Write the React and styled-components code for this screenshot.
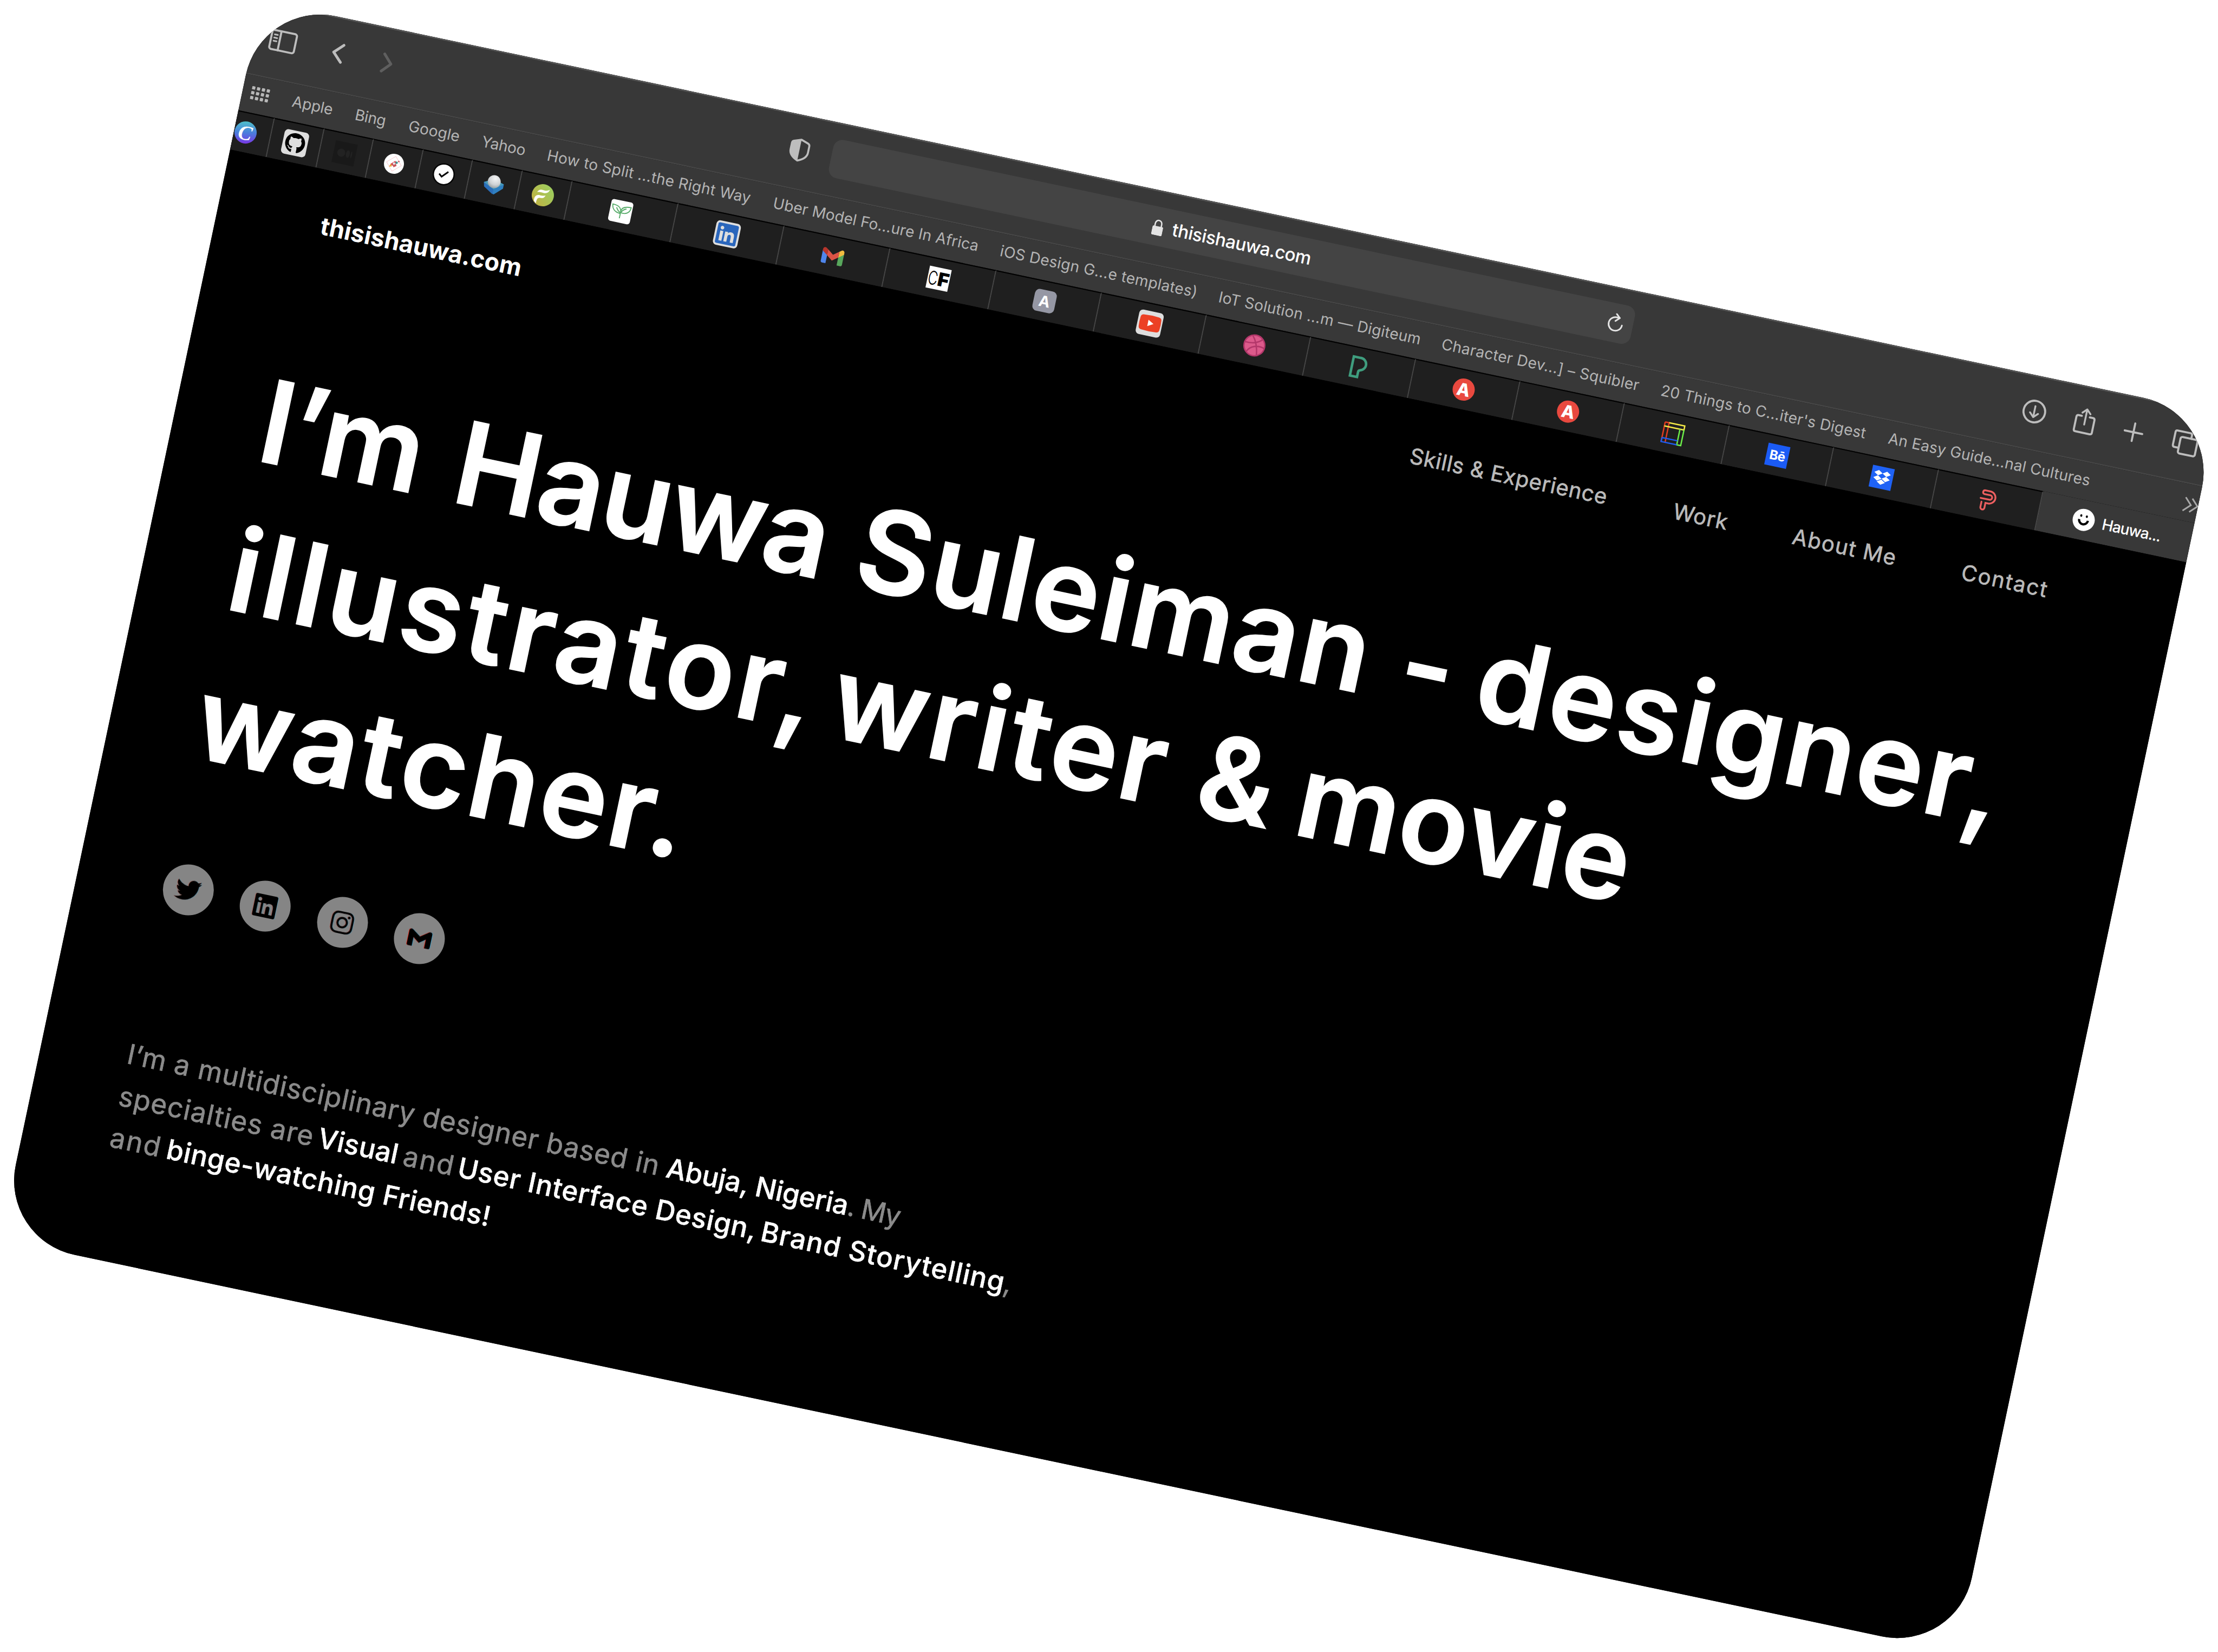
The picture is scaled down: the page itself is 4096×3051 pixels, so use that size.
import React from 'react';
import styled, { createGlobalStyle } from 'styled-components';
import { FaTwitter, FaLinkedin, FaInstagram, FaGithub, FaDropbox } from 'react-icons/fa';

const Global = createGlobalStyle`
  html, body { margin: 0; background: #fff; }
  body { overflow: hidden; font-family: Inter, Roboto, sans-serif; }
  * { box-sizing: border-box; }
`;

const Stage = styled.main`
  width: 4096px;
  height: 3051px;
  padding: 0.7px 0 0 482.5px;
  overflow: hidden;
  background: #fff;
`;

const Window = styled.div`
  display: flex;
  flex-direction: column;
  width: 3692px;
  height: 2337.5px;
  border-radius: 140.4px;
  overflow: hidden;
  background: #000;
  transform: rotate(11.92deg);
  transform-origin: 0 0;
`;

/* ---------- browser toolbar ---------- */

const Toolbar = styled.header`
  display: flex;
  align-items: flex-start;
  height: 137.6px;
  padding: 30.4px 24px 0 29px;
  background: #383838;
  border-bottom: 2.6px solid #484848;
  box-shadow: inset 0 2.6px 0 #565656;
`;

const ToolIcon = styled.svg`
  flex: none;
  width: ${(p) => p.$w}px;
  height: 72px;
  margin-left: ${(p) => p.$gap || 0}px;
  fill: none;
  stroke: ${(p) => p.$color || '#bdbdbd'};
  stroke-width: 3.8;
  stroke-linecap: round;
  stroke-linejoin: round;
  overflow: visible;
`;

const AddressBar = styled.div`
  display: grid;
  grid-template-columns: 1fr auto 1fr;
  align-items: center;
  flex: none;
  width: 1512.5px;
  height: 72px;
  margin-left: 41px;
  border-radius: 17px;
  background: #444;
`;

const Address = styled.div`
  grid-column: 2;
  display: flex;
  align-items: center;
  gap: 17.5px;
  color: #fff;
  font-size: 33.3px;
  line-height: 72px;
  font-weight: 500;
  letter-spacing: -0.48px;
`;

const LockIcon = styled.svg`
  width: 20px;
  height: 30px;
  margin-top: 3px;
`;

const ReloadIcon = styled.svg`
  justify-self: end;
  width: 30px;
  height: 36px;
  margin-right: 17px;
  fill: none;
  stroke: #e4e4e4;
  stroke-width: 3;
  stroke-linecap: round;
  stroke-linejoin: round;
`;

/* ---------- bookmarks ---------- */

const Bookmarks = styled.nav`
  display: flex;
  align-items: center;
  height: 69.4px;
  padding: 0 0 5px 16px;
  background: #383838;
  color: #b4b4b4;
  font-size: 28.2px;
  line-height: 40px;
`;

const Bookmark = styled.span`
  flex: none;
  width: ${(p) => p.$w}px;
  letter-spacing: ${(p) => p.$ls}px;
  white-space: nowrap;
`;

const DotsIcon = styled.svg`
  flex: none;
  width: 34px;
  height: 26px;
  margin-right: 44px;
  fill: #b8b8b8;
`;

const MoreIcon = styled.svg`
  flex: none;
  width: 30px;
  height: 30px;
  margin: 12px 0 0 auto;
  fill: none;
  stroke: #a8a8a8;
  stroke-width: 3;
`;

/* ---------- tabs ---------- */

const TabBar = styled.div`
  display: flex;
  height: 73.6px;
  background: #383838;
`;

const Tab = styled.div`
  flex: none;
  display: flex;
  align-items: center;
  justify-content: center;
  width: ${(p) => p.$w}px;
  margin-left: ${(p) => p.$offset || 0}px;
  border-top: 2.6px solid #000;
  border-right: 2.6px solid #474747;
  background: #1f1f1f;
`;

const ActiveTab = styled.div`
  flex: 1;
  display: flex;
  align-items: center;
  gap: 14px;
  padding-left: 63px;
  color: #fff;
  font-size: 28.2px;
  font-weight: 500;
  letter-spacing: -1.09px;
`;

const Favicon = styled.svg`
  width: 41px;
  height: 41px;
  overflow: visible;
`;

const Plate = styled.span`
  display: flex;
  align-items: center;
  justify-content: center;
  width: 46px;
  height: 46px;
  border-radius: 7px;
  background: #dedede;
  color: ${(p) => p.$color};
  font-size: ${(p) => p.$size}px;
`;

const Tile = styled.span`
  display: flex;
  align-items: center;
  justify-content: center;
  width: 41px;
  height: 41px;
  border-radius: ${(p) => p.$r || 0};
  background: ${(p) => p.$bg};
  color: #fff;
  font-family: ${(p) => p.$font || 'Inter, sans-serif'};
  font-size: ${(p) => p.$size}px;
  font-weight: ${(p) => p.$weight || 700};
  font-style: ${(p) => p.$style || 'normal'};
  line-height: 1;
  letter-spacing: ${(p) => p.$ls || 0}px;
`;

/* ---------- page ---------- */

const Page = styled.section`
  display: flex;
  flex-direction: column;
  flex: 1;
  background: #000;
  color: #fff;
`;

const PageNav = styled.nav`
  display: flex;
  align-items: center;
  height: 206px;
  padding-left: 193px;
`;

const Logo = styled.strong`
  font-size: 45px;
  font-weight: 700;
  line-height: 60px;
  letter-spacing: 0.19px;
`;

const Links = styled.div`
  display: flex;
  width: 1443px;
  margin-left: auto;
  color: #bababa;
  font-size: 40px;
  line-height: 60px;
  -webkit-text-stroke: 0.7px currentColor;
`;

const Headline = styled.h1`
  margin: 129.5px 0 0;
  font-size: 212px;
  font-weight: 600;
  line-height: 280.2px;
  -webkit-text-stroke: 2px currentColor;
`;

const Line = styled.span`
  display: flex;
  padding-left: ${(p) => p.$x}px;
`;

const Word = styled.span`
  flex: none;
  width: ${(p) => (p.$w ? `${p.$w}px` : 'auto')};
  letter-spacing: ${(p) => p.$ls || 0}px;
  white-space: nowrap;
`;

const StrongWord = styled(Word)`
  color: #fff;
  font-weight: 500;
  -webkit-text-stroke: 0.5px currentColor;
`;

const Socials = styled.div`
  display: flex;
  gap: 51.5px;
  margin: 131.7px 0 0 159.5px;
`;

const Social = styled.a`
  display: flex;
  align-items: center;
  justify-content: center;
  width: 94px;
  height: 94px;
  border-radius: 50%;
  background: #858585;
  color: #000;
  font-size: ${(p) => p.$size || 43}px;

  svg {
    overflow: visible;
    filter: drop-shadow(-1px 0 0 ${(p) => p.$red || '#a25a50'}) drop-shadow(1px 0 0 ${(p) => p.$blue || '#5a93ac'});
  }
`;

const Bio = styled.p`
  margin: 232.8px 0 0;
  color: #8b8b8b;
  font-size: 51px;
  line-height: 78.4px;
  -webkit-text-stroke: 0.7px currentColor;
`;

/* ---------- content ---------- */

const bookmarks = [
  ['Apple', 118.7, -0.17],
  ['Bing', 101, -0.37],
  ['Google', 137.9, 0.17],
  ['Yahoo', 123.8, -0.21],
  ['How to Split ...the Right Way', 426.4, 0.25],
  ['Uber Model Fo...ure In Africa', 428.5, 0.12],
  ['iOS Design G...e templates)', 412.3, 0.26],
  ['IoT Solution ...m — Digiteum', 420.9, 0.21],
  ['Character Dev...] – Squibler', 414, 0.28],
  ["20 Things to C...iter's Digest", 429.2, 0.25],
  ['An Easy Guide...nal Cultures', 384, 0.13],
];

const links = [
  ['Skills & Experience', 497, 0.72],
  ['Work', 225, 0.98],
  ['About Me', 319, 1.56],
  ['Contact', 0, 2.06],
];

export default function App() {
  return (
    <Stage>
      <Global />
      <Window>
        <Toolbar>
          <ToolIcon $w={51} viewBox="0 0 51 72">
            <rect x="2.4" y="18" width="46.4" height="35.8" rx="4" />
            <path d="M19 18v36" />
            <path d="M8 26h5.5M8 32h5.5M8 38h5.5" strokeWidth="3" />
          </ToolIcon>
          <ToolIcon $w={23} $gap={66} viewBox="0 0 23 72">
            <path d="M20 19.5 4 35.6 20 51.7" strokeWidth="5" />
          </ToolIcon>
          <ToolIcon $w={23} $gap={71} $color="#5f5f5f" viewBox="0 0 23 72">
            <path d="M3 19.5 18 35.6 3 51.7" strokeWidth="5" />
          </ToolIcon>
          <ToolIcon $w={38} $gap={747} viewBox="0 0 38 72">
            <path d="M19 15.6 32 20q3.4 1.2 3.4 4.6V37c0 8-5.4 13.4-16.4 17.8C8 50.4 2.6 45 2.6 37V24.6Q2.6 21.2 6 20Z" strokeWidth="3.6" />
            <path d="M19 15.6V54.8C8 50.4 2.6 45 2.6 37V24.6Q2.6 21.2 6 20Z" fill="#bdbdbd" stroke="none" />
          </ToolIcon>
          <AddressBar>
            <Address>
              <LockIcon viewBox="0 0 20 30">
                <rect x="0" y="13" width="20" height="17" rx="2.5" fill="#e4e4e4" />
                <path d="M4 14V8.5a6 6.5 0 0 1 12 0V14" fill="none" stroke="#e4e4e4" strokeWidth="2.6" />
              </LockIcon>
              <span>thisishauwa.com</span>
            </Address>
            <ReloadIcon viewBox="0 0 30 36">
              <path d="M27 20.5A12.500 12.500 0 1 1 14.5 7.5H20" />
              <path d="M13.5 1.500 20.5 7.8 13.5 14.5" />
            </ReloadIcon>
          </AddressBar>
          <ToolIcon $w={46} $gap={735.5} viewBox="0 0 46 72">
            <circle cx="23" cy="36.5" r="20" />
            <path d="M23 26.5v20M15.5 39.5 23 47l7.5-7.5" strokeWidth="3.4" />
          </ToolIcon>
          <ToolIcon $w={38} $gap={53} viewBox="0 0 38 72">
            <path d="M11.5 26H5.5Q2 26 2 29.5V53q0 3.5 3.5 3.5h27Q36 56.5 36 53V29.5Q36 26 32.5 26H26.5" />
            <path d="M19 41V12.5M11.5 20 19 12.5 26.5 20" strokeWidth="3.4" />
          </ToolIcon>
          <ToolIcon $w={36} $gap={54.5} viewBox="0 0 36 72">
            <path d="M18 19.5v33M1.5 36h33" />
          </ToolIcon>
          <ToolIcon $w={48} $gap={56} viewBox="0 0 48 72">
            <path d="M13 47H5.5Q2 47 2 43.5V19.5Q2 16 5.500 16H29.500Q33 16 33 19.500V26" />
            <rect x="13.5" y="26" width="32" height="31" rx="3.5" />
          </ToolIcon>
        </Toolbar>

        <Bookmarks>
          <DotsIcon viewBox="0 0 34 26">
            {[0, 1, 2].map((r) =>
              [0, 1, 2, 3].map((c) => (
                <rect key={`${r}${c}`} x={c * 9.2 + 0.2} y={r * 9.2 + 0.8} width="6" height="6" rx="1.2" />
              ))
            )}
          </DotsIcon>
          {bookmarks.map(([label, w, ls]) => (
            <Bookmark key={label} $w={w} $ls={ls}>{label}</Bookmark>
          ))}
          <MoreIcon viewBox="0 0 30 30">
            <path d="M4.500 2.500 16.500 15 3.500 28M17 2.500 29 15 16 28" />
          </MoreIcon>
        </Bookmarks>

        <TabBar>
          <Tab $w={94} $offset={-25}>
            <Tile
              $bg="linear-gradient(170deg,#4fc3c8 5%,#4a7fdc 50%,#7a35e6 95%)"
              $r="50%"
              $font="'Liberation Serif', serif"
              $style="italic"
              $size={38}
            >
              C
            </Tile>
          </Tab>
          <Tab $w={93.6}><Plate $color="#000" $size={38}><FaGithub /></Plate></Tab>
          <Tab $w={93.6}>
            <Favicon viewBox="0 0 41 41">
              <rect width="41" height="41" fill="#191919" />
              <circle cx="14" cy="20.5" r="7.5" fill="#222" />
              <ellipse cx="26.5" cy="20.5" rx="3.6" ry="7" fill="#222" />
              <ellipse cx="33" cy="20.5" rx="1.4" ry="6.2" fill="#222" />
            </Favicon>
          </Tab>
          <Tab $w={93.6}>
            <Favicon viewBox="0 0 41 41">
              <circle cx="20.5" cy="20.5" r="18.5" fill="#fff" />
              <rect x="10.500" y="10.500" width="20" height="20" transform="rotate(-42 20.500 20.500)" fill="none" stroke="#f6c9cd" strokeWidth="0.9" />
              <path d="M14 22 22 14.5 24.5 18 18 24.5Z" fill="#d9484f" />
              <path d="M18 22.5 24 19.5 26 23.5 21 27Z" fill="#c9565c" />
              <circle cx="20.5" cy="20" r="2.2" fill="#dfe9ee" />
              <circle cx="25" cy="17.5" r="2.2" fill="#3f8f8f" />
              <circle cx="28.5" cy="14.5" r="1.4" fill="#c9484f" />
              <path d="M12.5 27.5 14.5 21.5 18 26Z" fill="#e9a53a" />
            </Favicon>
          </Tab>
          <Tab $w={93.6}>
            <Favicon viewBox="0 0 41 41">
              <circle cx="20.5" cy="20.5" r="20.5" fill="#050505" />
              <circle cx="20.5" cy="20.5" r="18" fill="#fff" />
              <path d="M12 21 17.5 25.500 28 14.500" fill="none" stroke="#000" strokeWidth="3" />
            </Favicon>
          </Tab>
          <Tab $w={93.6}>
            <Favicon viewBox="0 0 41 41">
              <defs>
                <radialGradient id="dome" cx="0.55" cy="0.25" r="0.8">
                  <stop offset="0" stopColor="#f3f4f5" />
                  <stop offset="0.6" stopColor="#cfd2d5" />
                  <stop offset="1" stopColor="#8f979c" />
                </radialGradient>
              </defs>
              <path d="M2 19 19 10l20 6v8L24 38 5 27Z" fill="#2f7fc0" />
              <path d="M2 19 22 28.5V38L4 27Z" fill="#2a6db8" />
              <path d="M2 19 19 10l20 6-17 12.5Z" fill="#4799b8" />
              <circle cx="20.5" cy="14.5" r="12" fill="url(#dome)" />
            </Favicon>
          </Tab>
          <Tab $w={93.6}>
            <Favicon viewBox="0 0 41 41">
              <defs>
                <linearGradient id="leaf" x1="1" y1="0" x2="0" y2="1">
                  <stop offset="0.2" stopColor="#9fcb5c" />
                  <stop offset="0.9" stopColor="#c2b243" />
                </linearGradient>
              </defs>
              <circle cx="20.5" cy="20.5" r="20.5" fill="url(#leaf)" />
              <path d="M9 17C11 11.5 15 10.5 19 11c5 .6 8 .3 12.5-3C30 14 26.5 16.5 20.5 16c-5-.4-8-.6-11.5 1ZM6.5 34C5 27 8 21.5 15 21.5c4 0 6 .5 10.5-1.7C24.5 24.5 21.5 26.3 17 26.3c-4.5 0-6.500 3-6 11.500Z" fill="#fff" />
            </Favicon>
          </Tab>
          <Tab $w={200}>
            <Favicon viewBox="0 0 41 41">
              <rect width="41" height="41" rx="5" fill="#fff" />
              <g fill="none" stroke="#57ab69" strokeWidth="1.9">
                <path d="M20.5 33V20C20.5 13 26 9.5 38 9.5 38 19 31 24 21 22.5" />
                <path d="M20 24C11 23.5 4 19 3.5 9.5 14 9.5 19 12.5 20.5 20" />
                <path d="M11.5 14c2 4 4.5 6.5 8.5 8.5M30 13.5c-4 1.5-7 4-8.5 8" />
              </g>
            </Favicon>
          </Tab>
          <Tab $w={200}><Plate $color="#2a66bc" $size={44}><FaLinkedin /></Plate></Tab>
          <Tab $w={200}>
            <Favicon viewBox="0 0 41 41">
              <path d="M0.500 12v20.500a3 3 0 0 0 3 3H10V18Z" fill="#4f86ec" />
              <path d="M40.500 12v20.500a3 3 0 0 1-3 3H31V18Z" fill="#58a75c" />
              <path d="M31 9.5 34.5 7c2.5-1.8 6-.2 6 3v3.5L31 20.5Z" fill="#f0bb40" />
              <path d="M10 9.5 6.5 7c-2.5-1.8-6-.2-6 3v3.5L10 20.5Z" fill="#b6352c" />
              <path d="M10 9.5 20.5 17.5 31 9.5V20.5L20.5 28.5 10 20.5Z" fill="#dc5345" />
            </Favicon>
          </Tab>
          <Tab $w={200}>
            <Favicon viewBox="0 0 41 41">
              <rect width="41" height="41" fill="#fff" />
              <text x="1" y="33.5" fontFamily="Inter, sans-serif" fontSize="35" fontWeight="300" textLength="18" lengthAdjust="spacingAndGlyphs">C</text>
              <text x="19" y="33.5" fontFamily="Inter, sans-serif" fontSize="35" fontWeight="900" textLength="21" lengthAdjust="spacingAndGlyphs">F</text>
            </Favicon>
          </Tab>
          <Tab $w={199.8}><Tile $bg="#9597a4" $r="9px" $size={28} $weight={700}>A</Tile></Tab>
          <Tab $w={197.4}>
            <Plate>
              <Favicon viewBox="0 0 41 41">
                <path d="M6 6.5Q20.5 5 35 6.5 39.5 7 40 11.5q1 9 0 18Q39.5 34 35 34.5 20.5 36 6 34.5 1.5 34 1 29.5q-1-9 0-18Q1.5 7 6 6.5Z" fill="#ec4024" />
                <path d="M16.5 14.5 27 20.5 16.5 26.5Z" fill="#fff" />
              </Favicon>
            </Plate>
          </Tab>
          <Tab $w={197.4}>
            <Favicon viewBox="0 0 41 41">
              <circle cx="20.5" cy="20.5" r="19.2" fill="#dc5a8b" />
              <g fill="none" stroke="#b3376a" strokeWidth="2.6">
                <circle cx="20.5" cy="20.5" r="19.2" />
                <path d="M14 3C21 11 26 22 28 37.5M2 17C14 18 26 15 33.5 7M8 34.5C13 23 26 18 39.5 22.5" />
              </g>
            </Favicon>
          </Tab>
          <Tab $w={197.4}>
            <Favicon viewBox="0 0 41 41">
              <path d="M7.5 2.5H20a11.5 11.5 0 0 1 4 22.6Q21 26 21 28.500V38.5H7.500Z" fill="none" stroke="#3f9d7e" strokeWidth="4.6" />
            </Favicon>
          </Tab>
          <Tab $w={197.4}><Tile $bg="#e9493f" $r="50%" $size={32} $weight={800}>A</Tile></Tab>
          <Tab $w={197.4}><Tile $bg="#e9493f" $r="50%" $size={32} $weight={800}>A</Tile></Tab>
          <Tab $w={197.4}>
            <Favicon viewBox="0 0 41 41">
              <g fill="none" strokeWidth="2.5">
                <path d="M2 2h7.5v37M2 39V2" stroke="#e23c22" />
                <path d="M9.5 2H39v7.5H2" stroke="#f3ea47" />
                <path d="M39 9.5V39h-7.5V9.5" stroke="#6df04a" />
                <path d="M2 31.5h29.5M2 31.5V39h29.5" stroke="#205cf0" />
              </g>
            </Favicon>
          </Tab>
          <Tab $w={197.6}><Tile $bg="#1b5bf5" $size={24} $ls={-0.5}>Bē</Tile></Tab>
          <Tab $w={197.4}><Tile $bg="#1f62f5" $size={31}><FaDropbox /></Tile></Tab>
          <Tab $w={197.8}>
            <Favicon viewBox="0 0 41 41">
              <path d="M9 19H25.500a4.200 4.200 0 0 0 0-8.400H14a3.600 3.600 0 0 1 0-7H24.500a11 11 0 0 1 0 22.600H19.500V35.500a3.800 3.800 0 0 1-7.600 0V25.500" fill="none" stroke="#ec5f60" strokeWidth="3.3" strokeLinecap="round" />
            </Favicon>
          </Tab>
          <ActiveTab>
            <Favicon viewBox="0 0 41 41">
              <circle cx="20.5" cy="20.5" r="20.5" fill="#fff" />
              <ellipse cx="14.5" cy="13.5" rx="2" ry="2.3" />
              <ellipse cx="25" cy="13.5" rx="2" ry="2.3" />
              <path d="M12 20.5a8.2 8.2 0 0 0 16.5 0" fill="none" stroke="#000" strokeWidth="4.2" />
            </Favicon>
            <span>Hauwa...</span>
          </ActiveTab>
        </TabBar>

        <Page>
          <PageNav>
            <Logo>thisishauwa.com</Logo>
            <Links>
              {links.map(([label, w, ls]) => (
                <Word key={label} $w={w} $ls={ls}>{label}</Word>
              ))}
            </Links>
          </PageNav>
          <Headline>
            <Line $x={161.5}>
              <Word $w={368} $ls={-0.76}>I’m</Word>
              <Word $w={758} $ls={-1.54}>Hauwa</Word>
              <Word $w={1025.3} $ls={2.62}>Suleiman</Word>
              <Word $w={144.7}>-</Word>
              <Word $ls={3.98}>designer,</Word>
            </Line>
            <Line $x={162.5}>
              <Word $w={1137} $ls={6.48}>illustrator,</Word>
              <Word $w={691} $ls={5.04}>writer</Word>
              <Word $w={187}>&amp;</Word>
              <Word $ls={1.01}>movie</Word>
            </Line>
            <Line $x={158.5}>
              <Word $ls={4.77}>watcher.</Word>
            </Line>
          </Headline>
          <Socials>
            <Social $size={47}><FaTwitter /></Social>
            <Social $size={48}><FaLinkedin /></Social>
            <Social $size={47}><FaInstagram /></Social>
            <Social $red="#e0291a" $blue="#3f9cc4">
              <svg width="43" height="32" viewBox="0 0 44 32">
                <path d="M0 4A4 4 0 0 1 6.5 1L22 12 37.5 1A4 4 0 0 1 44 4V29a3 3 0 0 1-3 3H34V15L22 24 10 15V32H3a3 3 0 0 1-3-3Z" />
              </svg>
            </Social>
          </Socials>
          <Bio>
            <Line $x={160}>
              <Word $w={1017.5} $ls={0.96}>I’m a multidisciplinary designer based in</Word>
              <StrongWord $w={342} $ls={-0.11}>Abuja, Nigeria</StrongWord>
              <Word $w={25.5}>.</Word>
              <Word $ls={-1.32}>My</Word>
            </Line>
            <Line $x={160.5}>
              <Word $w={376} $ls={1.31}>specialties are</Word>
              <StrongWord $w={161} $ls={0.26}>Visual</StrongWord>
              <Word $w={103} $ls={2.12}>and</Word>
              <StrongWord $w={572} $ls={0.8}>User Interface Design,</StrongWord>
              <StrongWord $w={458} $ls={1.29}>Brand Storytelling</StrongWord>
              <Word>,</Word>
            </Line>
            <Line $x={160.5}>
              <Word $w={106.8} $ls={2.12}>and</Word>
              <StrongWord $ls={0.72}>binge-watching Friends!</StrongWord>
            </Line>
          </Bio>
        </Page>
      </Window>
    </Stage>
  );
}
